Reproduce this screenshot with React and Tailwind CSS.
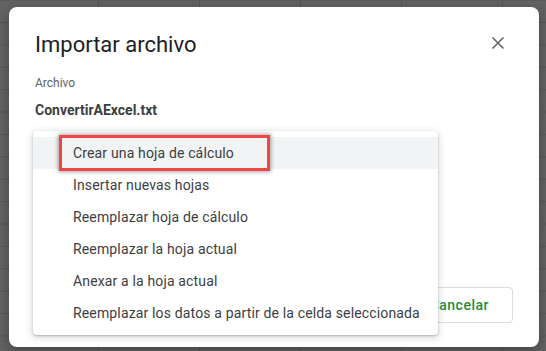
import React from "react";

const items = [
  "Crear una hoja de cálculo",
  "Insertar nuevas hojas",
  "Reemplazar hoja de cálculo",
  "Reemplazar la hoja actual",
  "Anexar a la hoja actual",
  "Reemplazar los datos a partir de la celda seleccionada",
];

export default function App() {
  return (
    <div
      className="relative w-[546px] h-[351px] overflow-hidden bg-[#626262] bg-[linear-gradient(to_right,#565656_1px,transparent_1px),linear-gradient(to_bottom,#565656_1px,transparent_1px)] bg-[size:101px_22.4px] bg-[position:98px_22px] pt-[7px] pl-[9px] font-['Roboto','Liberation_Sans',sans-serif]"
    >
      <div className="relative w-[530px] h-[340px] bg-white rounded-[8px] flex flex-col pt-[24px] px-[26px] pb-[24px] shadow-[0_4px_12px_rgba(0,0,0,0.3)]">
        <div className="flex items-start justify-between">
          <h1 className="text-[22px] leading-[28px] text-[#202124] font-normal">Importar archivo</h1>
          <svg width="24" height="24" viewBox="0 0 24 24" className="mr-[3px] mt-0">
            <path d="M6.5 6.5L17.5 17.5M17.5 6.5L6.5 17.5" stroke="#5f6368" strokeWidth="1.6" fill="none" />
          </svg>
        </div>
        <div className="mt-[16px] text-[12px] leading-[16px] text-[#5f6368]">Archivo</div>
        <div className="mt-[9px] text-[14px] leading-[20px] font-bold text-[#3c4043]">ConvertirAExcel.txt</div>
        <div className="flex-1" />
        <div className="flex justify-end">
          <button className="h-[36px] pl-[24px] pr-[23px] border border-[#dadce0] rounded-[4px] text-[14px] font-medium tracking-[0.5px] text-[#1e8e3e]">
            Cancelar
          </button>
        </div>

        <div className="absolute left-[24px] top-[124px] w-[405px] bg-white rounded-[4px] py-[6px] shadow-[0_2px_6px_2px_rgba(60,64,67,0.15),0_1px_2px_rgba(60,64,67,0.3)]">
          {items.map((t, i) => (
            <div
              key={i}
              className={
                "h-[32px] flex items-center pl-[40px] text-[14px] leading-[20px] tracking-[0.15px] text-[#3c4043] " +
                (i === 0 ? "bg-[#f1f3f4]" : "")
              }
            >
              {t}
            </div>
          ))}
          <div className="absolute left-[26px] top-[4px] w-[211px] h-[36px] border-[3px] border-[#f24646] shadow-[0_0_4px_1px_rgba(0,0,0,0.35)]" />
        </div>
      </div>
    </div>
  );
}
